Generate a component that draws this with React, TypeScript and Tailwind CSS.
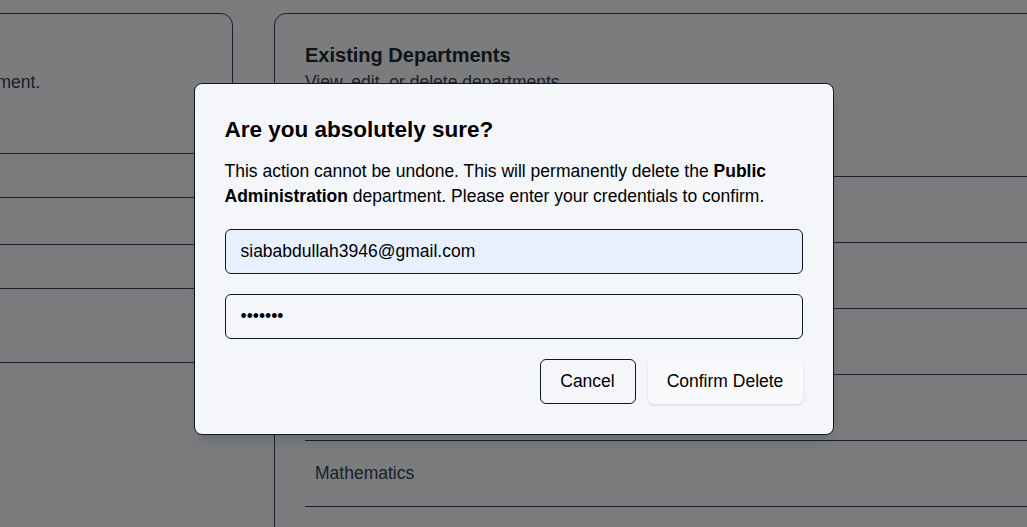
import React from "react";

export default function App() {
  const rows = ["Computer Science", "Physics", "Public Administration", "Economics", "Mathematics", "Chemistry"];
  const font = { fontFamily: '"Liberation Sans", Arial, sans-serif' };
  return (
    <div className="relative h-screen w-screen overflow-hidden bg-[#f6f8fc] text-gray-800" style={font}>
      <div className="flex items-start gap-[41px] pt-[13px]">
        {/* Left card */}
        <div className="-ml-[339px] w-[572px] shrink-0 rounded-xl border border-gray-700 px-[30px] pt-[27px] pb-[30px]">
          <h2 className="text-[20px] leading-[28px] font-bold text-gray-800">Add Department</h2>
          <p className="text-[17.5px] leading-[26px] text-gray-700">Fill in the details to create a new department.</p>
          <label className="mt-[26px] mb-2 block text-[16px] leading-6 text-gray-700">Name</label>
          <div className="h-[45px] rounded-md border border-gray-700"></div>
          <label className="mt-[14px] mb-2 block text-[16px] leading-6 text-gray-700">Code</label>
          <div className="h-[45px] rounded-md border border-gray-700"></div>
          <div className="mt-[11px] h-[32px] w-[60px] rounded-md text-[14px] leading-[32px] text-gray-700">Add</div>
        </div>

        {/* Right card */}
        <div className="w-[900px] shrink-0 rounded-xl border border-gray-700 px-[30px] pt-[27px] pb-[30px]">
          <h2 className="text-[20px] leading-[28px] font-bold text-gray-800">Existing Departments</h2>
          <p className="text-[17.5px] leading-[26px] text-gray-700">View, edit, or delete departments</p>
          <div className="mt-[81px]">
            {rows.map((r) => (
              <div key={r} className="flex h-[66px] items-center border-t border-gray-700 px-[10px] text-[17.5px] text-gray-700">
                {r}
              </div>
            ))}
          </div>
        </div>
      </div>

      {/* Overlay */}
      <div className="absolute inset-0 flex items-start justify-center bg-black/50 pt-[83px]">
        <div className="w-[640px] rounded-lg border border-gray-900 bg-[#f4f6fa] p-[30px] text-black shadow-lg">
          <h2 className="text-[22.5px] leading-[32px] font-bold">Are you absolutely sure?</h2>
          <p className="mt-[13px] text-[17.5px] leading-[25px]">
            This action cannot be undone. This will permanently delete the <b>Public Administration</b> department. Please
            enter your credentials to confirm.
          </p>
          <input
            type="email"
            readOnly
            value="siababdullah3946@gmail.com"
            className="mt-[20px] block h-[45px] w-full rounded-md border border-gray-900 bg-[#e8f0fe] px-[15px] text-[17.5px] text-black outline-none"
            style={font}
          />
          <input
            type="password"
            readOnly
            value="abcdefg"
            className="mt-[20px] block h-[45px] w-full rounded-md border border-gray-900 bg-transparent px-[15px] text-[17.5px] text-black outline-none"
            style={font}
          />
          <div className="mt-[20px] flex justify-end gap-[12px]">
            <button className="h-[45px] w-[96px] rounded-md border border-gray-900 text-[17.5px] text-black">Cancel</button>
            <button className="h-[45px] w-[155px] rounded-md bg-[#f8f9fb] text-[17.5px] text-black shadow-sm">Confirm Delete</button>
          </div>
        </div>
      </div>
    </div>
  );
}
